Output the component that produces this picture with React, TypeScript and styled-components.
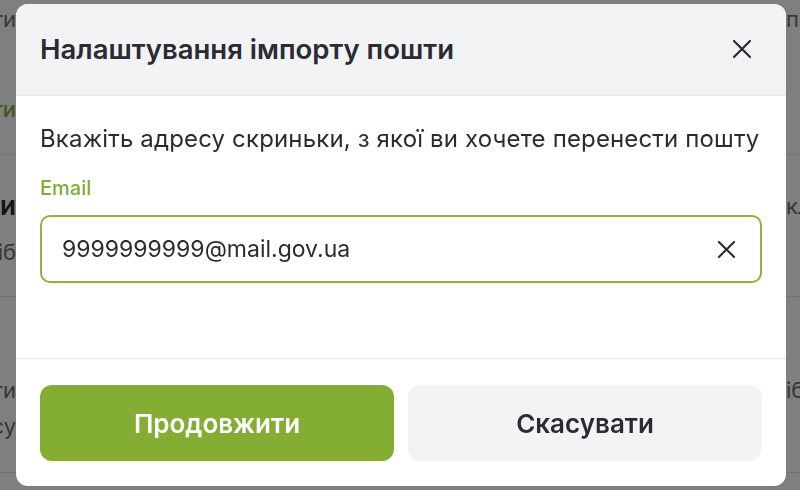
import React, { useEffect, useRef, useState } from "react"
import styled, { createGlobalStyle } from "styled-components"

const GlobalStyle = createGlobalStyle`
  html, body {
    margin: 0;
    padding: 0;
    background: #ffffff;
    font-family: Inter, "Noto Sans", sans-serif;
    -webkit-font-smoothing: antialiased;
  }
  * { box-sizing: border-box; }
`

const CloseIcon: React.FC<{ size?: number }> = ({ size = 20 }) => (
  <svg width={size} height={size} viewBox="0 0 20 20" fill="none">
    <path
      d="M2 2L18 18M18 2L2 18"
      stroke="#2b2b33"
      strokeWidth="2.2"
      strokeLinecap="round"
    />
  </svg>
)

// page that sits behind the dimmed overlay
const backgroundRows = [
  { height: 155, left: ["Імпорт пошти", "Продовжити"], right: "пошта", tone: ["gray", "green"] },
  { height: 142, left: ["Налаштування пошти", "Оберіть спосіб"], right: "ключ", tone: ["dark", "gray"] },
  { height: 176, left: ["Перенесення пошти", "з іншого ресурсу"], right: "ібокс", tone: ["gray", "gray"] },
]

export default function App() {
  const [email, setEmail] = useState("9999999999@mail.gov.ua")
  const inputRef = useRef<HTMLInputElement>(null)

  useEffect(() => {
    const el = inputRef.current
    if (el) {
      el.focus()
      el.setSelectionRange(10, 10)
    }
  }, [])

  return (
    <>
      <GlobalStyle />
      <Page>
        {backgroundRows.map((row, i) => (
          <PageRow key={i} style={{ height: row.height }}>
            <LeftEdge>
              {row.left.map((text, j) => (
                <EdgeText key={j} $tone={row.tone[j]} $first={j === 0} $row={i}>
                  {text}
                </EdgeText>
              ))}
            </LeftEdge>
            <RightEdge>
              <EdgeText $tone="gray" $first $row={i}>
                {row.right}
              </EdgeText>
            </RightEdge>
          </PageRow>
        ))}
      </Page>

      <Overlay>
        <Modal>
          <ModalHeader>
            <Title>Налаштування імпорту пошти</Title>
            <IconButton aria-label="Закрити">
              <CloseIcon size={20} />
            </IconButton>
          </ModalHeader>

          <ModalBody>
            <Description>
              Вкажіть адресу скриньки, з якої ви хочете перенести пошту
            </Description>
            <Field>
              <Label htmlFor="email">Email</Label>
              <InputWrap>
                <Input
                  id="email"
                  ref={inputRef}
                  value={email}
                  onChange={(e) => setEmail(e.target.value)}
                />
                <IconButton aria-label="Очистити" onClick={() => setEmail("")}>
                  <CloseIcon size={19} />
                </IconButton>
              </InputWrap>
            </Field>
          </ModalBody>

          <ModalFooter>
            <Button $variant="primary">Продовжити</Button>
            <Button $variant="secondary">Скасувати</Button>
          </ModalFooter>
        </Modal>
      </Overlay>
    </>
  )
}

const Page = styled.div`
  display: flex;
  flex-direction: column;
  width: 800px;
  height: 490px;
  overflow: hidden;
`

const PageRow = styled.div`
  display: flex;
  justify-content: space-between;
  border-bottom: 1px solid #e3e4e8;
`

const LeftEdge = styled.div`
  width: 16px;
  overflow: hidden;
  display: flex;
  flex-direction: column;
  align-items: flex-end;
`

const RightEdge = styled.div`
  width: 14px;
  overflow: hidden;
  display: flex;
  flex-direction: column;
  align-items: flex-start;
`

const EdgeText = styled.span<{ $tone: string; $first: boolean; $row: number }>`
  white-space: nowrap;
  font-size: ${(p) => (p.$tone === "dark" ? "26px" : "22px")};
  font-weight: ${(p) => (p.$tone === "dark" ? 600 : p.$tone === "green" ? 500 : 400)};
  color: ${(p) =>
    p.$tone === "green" ? "#7fad35" : p.$tone === "dark" ? "#2b2b33" : "#6b6d75"};
  line-height: 30px;
  margin-top: ${(p) =>
    p.$row === 0
      ? p.$first ? "4px" : "60px"
      : p.$row === 1
        ? p.$first ? "36px" : "16px"
        : p.$first ? "78px" : "6px"};
`

const Overlay = styled.div`
  position: fixed;
  inset: 0;
  background: rgba(0, 0, 0, 0.5);
  display: flex;
  justify-content: center;
  align-items: flex-start;
  padding-top: 4px;
`

const Modal = styled.div`
  width: 770px;
  height: 482px;
  margin-left: 2px;
  background: #ffffff;
  border-radius: 12px;
  overflow: hidden;
  display: flex;
  flex-direction: column;
`

const ModalHeader = styled.div`
  height: 92px;
  flex-shrink: 0;
  display: flex;
  align-items: center;
  justify-content: space-between;
  padding: 0 34px 2px 24px;
  background: #f2f3f5;
  border-bottom: 1px solid #e4e5e9;
`

const Title = styled.h2`
  margin: 0;
  font-size: 27.5px;
  font-weight: 600;
  color: #2b2b33;
`

const IconButton = styled.button`
  display: flex;
  align-items: center;
  justify-content: center;
  padding: 0;
  border: none;
  background: none;
  cursor: pointer;
`

const ModalBody = styled.div`
  flex: 1;
  display: flex;
  flex-direction: column;
  gap: 21px;
  padding: 27px 24px 0;
  border-bottom: 1px solid #e8e9ec;
`

const Description = styled.p`
  margin: 0;
  font-size: 24px;
  line-height: 32px;
  letter-spacing: 0.15px;
  color: #2b2b33;
`

const Field = styled.div`
  display: flex;
  flex-direction: column;
  gap: 15px;
`

const Label = styled.label`
  font-size: 20px;
  font-weight: 500;
  line-height: 24px;
  color: #7fad35;
`

const InputWrap = styled.div`
  height: 68px;
  display: flex;
  align-items: center;
  gap: 12px;
  padding: 0 24px 0 20px;
  border: 2px solid #8ab43f;
  border-radius: 10px;
`

const Input = styled.input`
  flex: 1;
  border: none;
  outline: none;
  padding: 0;
  background: transparent;
  font-family: Inter, "Noto Sans", sans-serif;
  font-size: 23px;
  color: #2b2b33;
  caret-color: #2b2b33;
`

const ModalFooter = styled.div`
  height: 127px;
  flex-shrink: 0;
  display: grid;
  grid-template-columns: 1fr 1fr;
  gap: 14px;
  padding: 26px 24px 25px;
`

const Button = styled.button<{ $variant: "primary" | "secondary" }>`
  border: none;
  border-radius: 12px;
  font-family: Inter, "Noto Sans", sans-serif;
  font-size: 26px;
  font-weight: 600;
  cursor: pointer;
  background: ${(p) => (p.$variant === "primary" ? "#83ae33" : "#f2f3f5")};
  color: ${(p) => (p.$variant === "primary" ? "#ffffff" : "#2b2b33")};
`
